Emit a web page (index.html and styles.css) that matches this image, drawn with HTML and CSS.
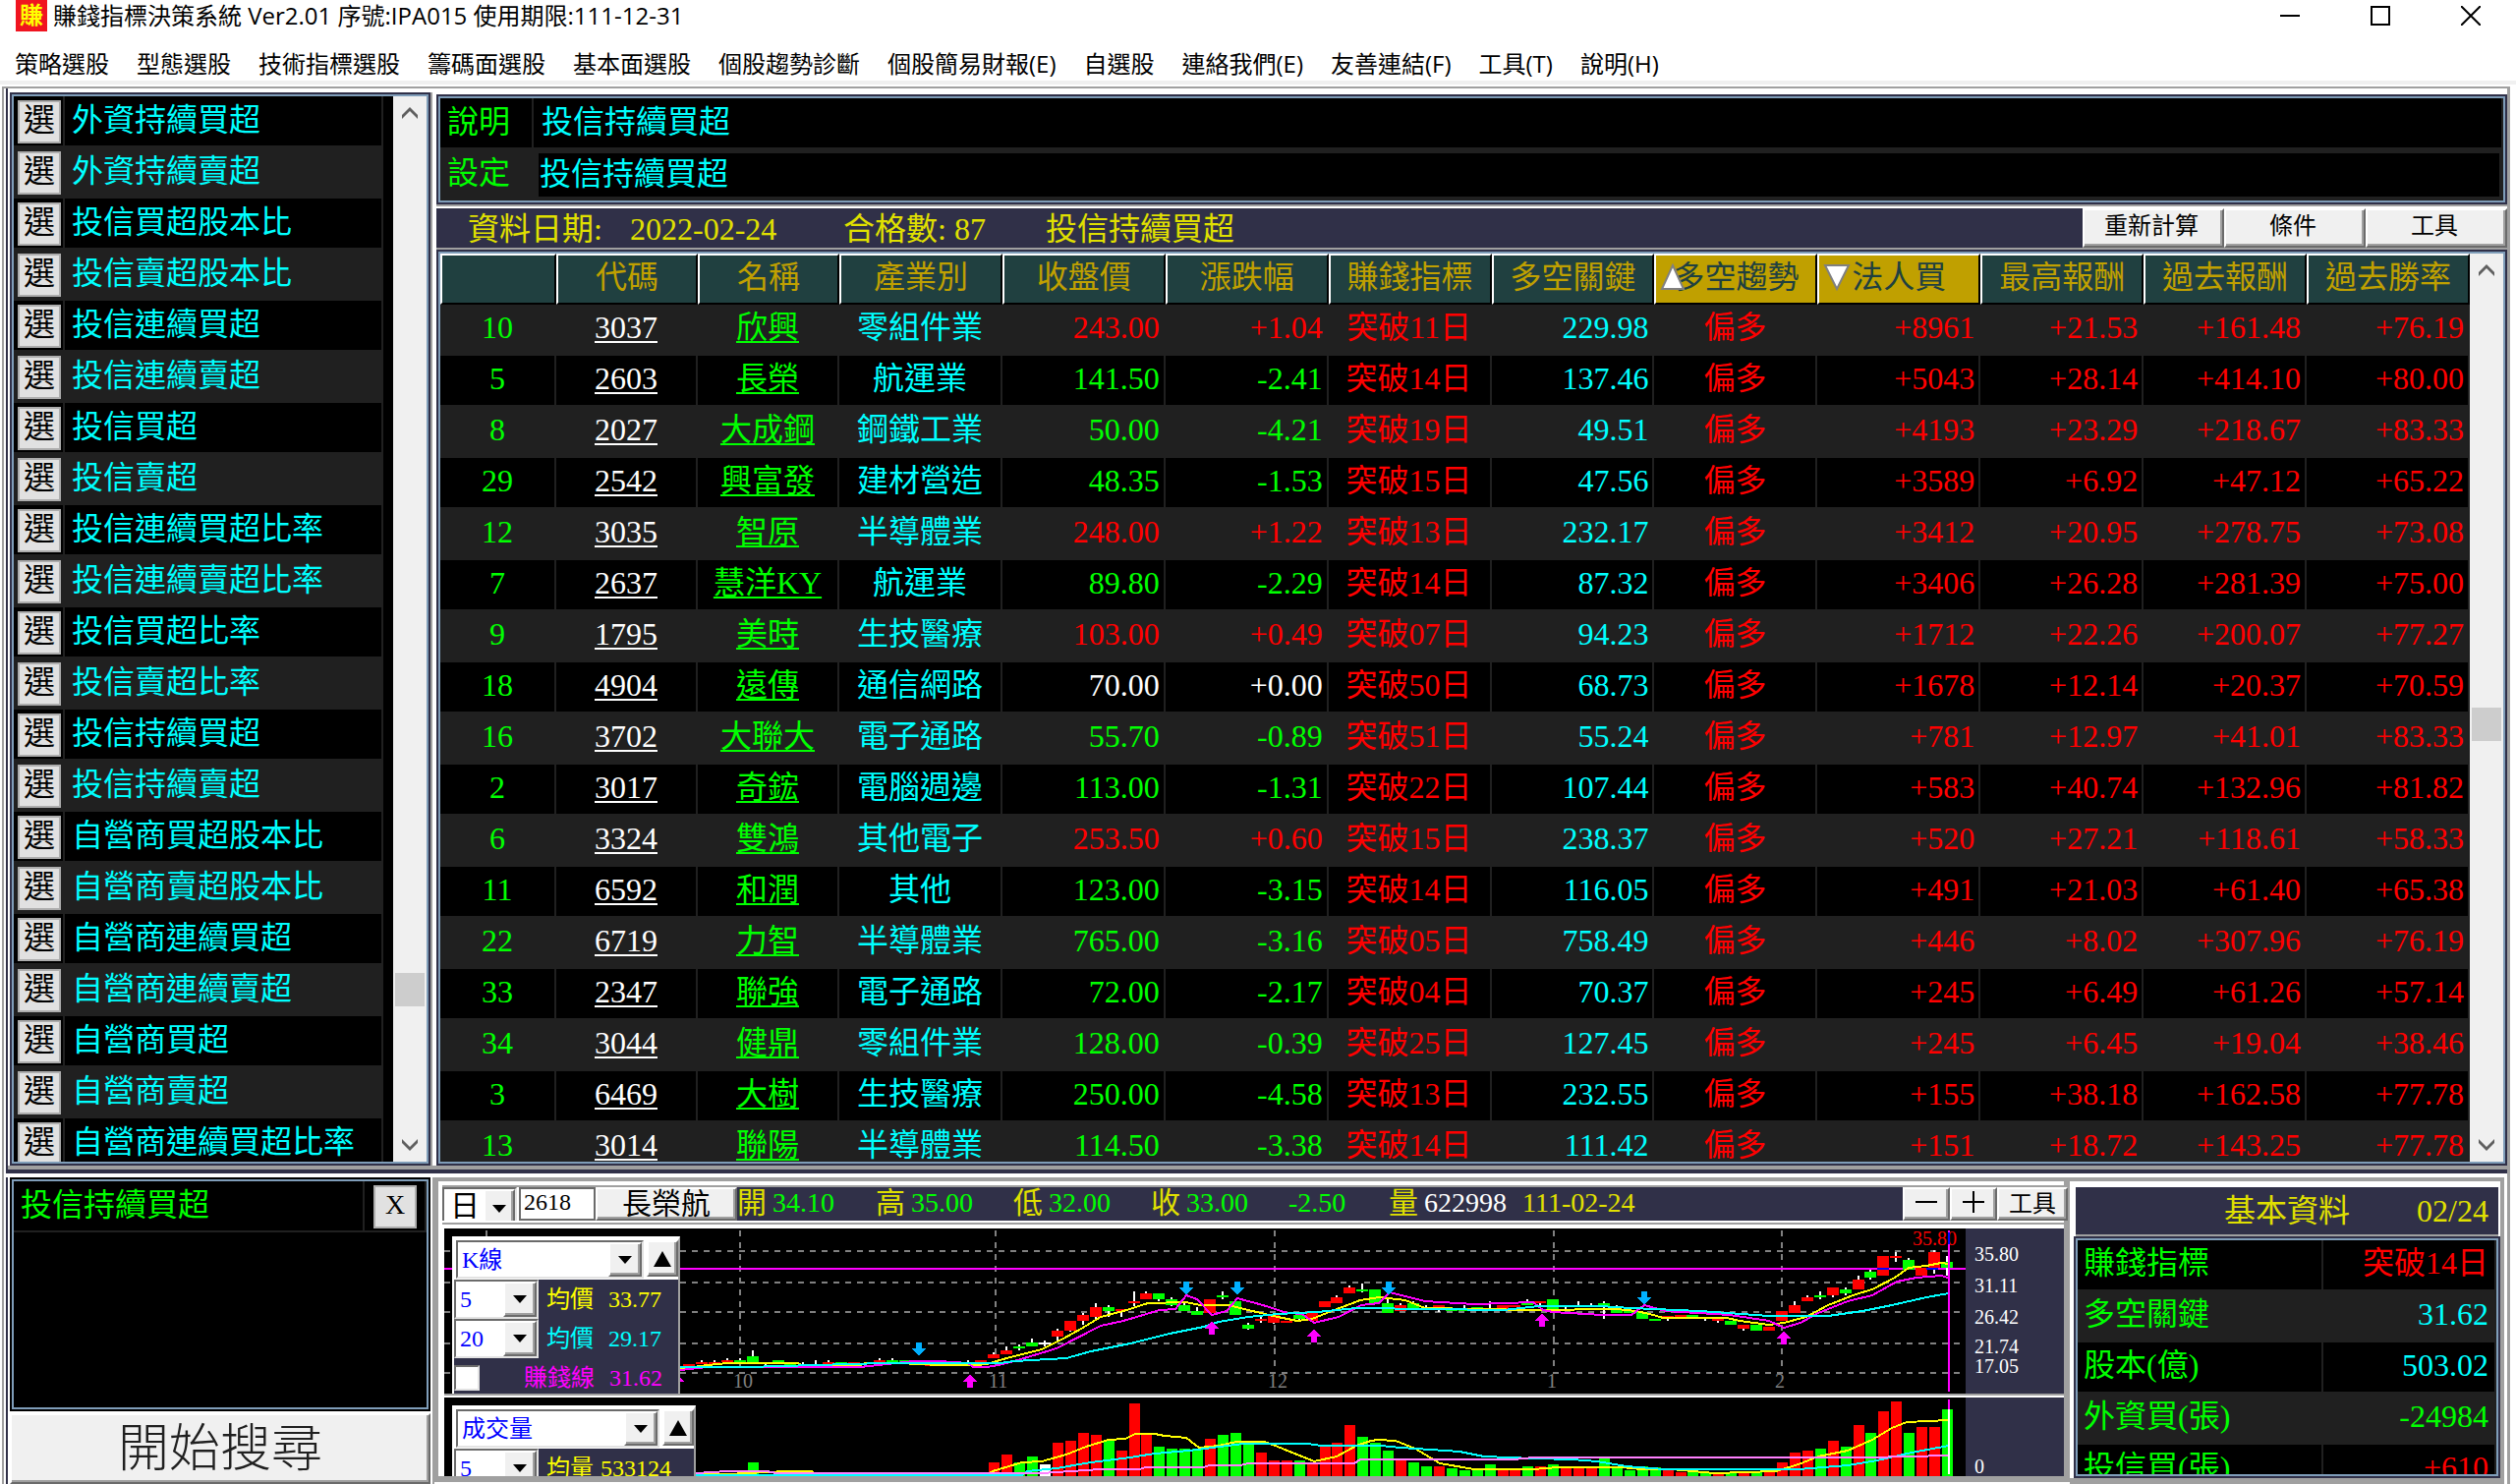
FILE: index.html
```html
<!DOCTYPE html>
<html lang="zh-Hant">
<head>
<meta charset="utf-8">
<title>賺錢指標決策系統</title>
<link rel="stylesheet" href="styles.css">
</head>
<body>
<svg class="sprite" aria-hidden="true">
  <symbol id="caret" viewBox="0 0 14 8"><path d="M0 0H14L7 8Z"/></symbol>
  <symbol id="peak" viewBox="0 0 18 16"><path d="M9 0L18 16H0Z"/></symbol>
  <symbol id="chev-up" viewBox="0 0 16 12"><path d="M0 8L8 0L16 8V12L8 4L0 12Z"/></symbol>
  <symbol id="chev-down" viewBox="0 0 16 12"><path d="M0 4L8 12L16 4V0L8 8L0 0Z"/></symbol>
</svg>
<div class="app">
  <header class="titlebar">
    <span class="logo">賺</span>
    <h1 class="title">賺錢指標決策系統 Ver2.01 序號:IPA015 使用期限:111-12-31</h1>
    <div class="window-buttons">
      <button type="button" aria-label="最小化"><svg width="20" height="20" viewBox="0 0 20 20"><path d="M0 10H20"/></svg></button>
      <button type="button" aria-label="最大化"><svg width="20" height="20" viewBox="0 0 20 20"><path d="M1 1H19V19H1Z"/></svg></button>
      <button type="button" aria-label="關閉"><svg width="20" height="20" viewBox="0 0 20 20"><path d="M0 0L20 20M20 0L0 20"/></svg></button>
    </div>
  </header>
  <nav class="menu">
    <a href="#">策略選股</a><a href="#">型態選股</a><a href="#">技術指標選股</a><a href="#">籌碼面選股</a><a href="#">基本面選股</a><a href="#">個股趨勢診斷</a><a href="#">個股簡易財報(E)</a><a href="#">自選股</a><a href="#">連絡我們(E)</a><a href="#">友善連結(F)</a><a href="#">工具(T)</a><a href="#">說明(H)</a>
  </nav>
  <main class="workspace">
    <section class="upper">
      <div class="list-frame">
        <div class="panel picker">
          <ul class="strategies">
            <li><button type="button">選</button><span>外資持續買超</span></li>
            <li><button type="button">選</button><span>外資持續賣超</span></li>
            <li><button type="button">選</button><span>投信買超股本比</span></li>
            <li><button type="button">選</button><span>投信賣超股本比</span></li>
            <li><button type="button">選</button><span>投信連續買超</span></li>
            <li><button type="button">選</button><span>投信連續賣超</span></li>
            <li><button type="button">選</button><span>投信買超</span></li>
            <li><button type="button">選</button><span>投信賣超</span></li>
            <li><button type="button">選</button><span>投信連續買超比率</span></li>
            <li><button type="button">選</button><span>投信連續賣超比率</span></li>
            <li><button type="button">選</button><span>投信買超比率</span></li>
            <li><button type="button">選</button><span>投信賣超比率</span></li>
            <li><button type="button">選</button><span>投信持續買超</span></li>
            <li><button type="button">選</button><span>投信持續賣超</span></li>
            <li><button type="button">選</button><span>自營商買超股本比</span></li>
            <li><button type="button">選</button><span>自營商賣超股本比</span></li>
            <li><button type="button">選</button><span>自營商連續買超</span></li>
            <li><button type="button">選</button><span>自營商連續賣超</span></li>
            <li><button type="button">選</button><span>自營商買超</span></li>
            <li><button type="button">選</button><span>自營商賣超</span></li>
            <li><button type="button">選</button><span>自營商連續買超比率</span></li>
          </ul>
          <div class="scrollbar">
            <button type="button" aria-label="向上捲動"><svg width="16" height="12"><use href="#chev-up"/></svg></button>
            <i class="before-low"></i><b></b><i class="after-low"></i>
            <button type="button" aria-label="向下捲動"><svg width="16" height="12"><use href="#chev-down"/></svg></button>
          </div>
        </div>
      </div>
      <div class="results">
        <div class="panel summary">
          <div class="summary-row"><span class="summary-name">說明</span><span class="summary-text">投信持續買超</span></div>
          <div class="summary-row alt"><label class="summary-name" for="setting">設定</label><input class="summary-input" id="setting" value="投信持續買超"></div>
        </div>
        <div class="result-bar">
          <div class="result-info"><span class="date">資料日期:</span><time>2022-02-24</time><span class="count">合格數: 87</span><span>投信持續買超</span></div>
          <button type="button" class="raised">重新計算</button>
          <button type="button" class="raised">條件</button>
          <button type="button" class="raised">工具</button>
        </div>
        <div class="panel table-panel">
          <div class="table-view">
          <table class="stocks">
            <colgroup><col class="c-rank"><col class="c-code"><col class="c-code"><col span="10"></colgroup>
            <thead><tr>
              <th aria-label="序"></th><th>代碼</th><th>名稱</th><th>產業別</th><th>收盤價</th><th>漲跌幅</th><th>賺錢指標</th><th>多空關鍵</th>
              <th class="sorted"><svg class="sort up" width="26" height="28" viewBox="0 0 26 28"><path d="M13 2L24 26H2Z"/></svg>多空趨勢</th>
              <th class="sorted"><svg class="sort down" width="28" height="28" viewBox="0 0 28 28"><path d="M2 2H26L14 26Z"/></svg>法人買</th>
              <th>最高報酬</th><th>過去報酬</th><th>過去勝率</th>
            </tr></thead>
            <tbody>
              <tr class="rise"><td>10</td><td><a href="#">3037</a></td><td><a href="#">欣興</a></td><td>零組件業</td><td>243.00</td><td>+1.04</td><td>突破11日</td><td>229.98</td><td>偏多</td><td>+8961</td><td>+21.53</td><td>+161.48</td><td>+76.19</td></tr>
              <tr class="fall"><td>5</td><td><a href="#">2603</a></td><td><a href="#">長榮</a></td><td>航運業</td><td>141.50</td><td>-2.41</td><td>突破14日</td><td>137.46</td><td>偏多</td><td>+5043</td><td>+28.14</td><td>+414.10</td><td>+80.00</td></tr>
              <tr class="fall"><td>8</td><td><a href="#">2027</a></td><td><a href="#">大成鋼</a></td><td>鋼鐵工業</td><td>50.00</td><td>-4.21</td><td>突破19日</td><td>49.51</td><td>偏多</td><td>+4193</td><td>+23.29</td><td>+218.67</td><td>+83.33</td></tr>
              <tr class="fall"><td>29</td><td><a href="#">2542</a></td><td><a href="#">興富發</a></td><td>建材營造</td><td>48.35</td><td>-1.53</td><td>突破15日</td><td>47.56</td><td>偏多</td><td>+3589</td><td>+6.92</td><td>+47.12</td><td>+65.22</td></tr>
              <tr class="rise"><td>12</td><td><a href="#">3035</a></td><td><a href="#">智原</a></td><td>半導體業</td><td>248.00</td><td>+1.22</td><td>突破13日</td><td>232.17</td><td>偏多</td><td>+3412</td><td>+20.95</td><td>+278.75</td><td>+73.08</td></tr>
              <tr class="fall"><td>7</td><td><a href="#">2637</a></td><td><a href="#">慧洋KY</a></td><td>航運業</td><td>89.80</td><td>-2.29</td><td>突破14日</td><td>87.32</td><td>偏多</td><td>+3406</td><td>+26.28</td><td>+281.39</td><td>+75.00</td></tr>
              <tr class="rise"><td>9</td><td><a href="#">1795</a></td><td><a href="#">美時</a></td><td>生技醫療</td><td>103.00</td><td>+0.49</td><td>突破07日</td><td>94.23</td><td>偏多</td><td>+1712</td><td>+22.26</td><td>+200.07</td><td>+77.27</td></tr>
              <tr class="flat"><td>18</td><td><a href="#">4904</a></td><td><a href="#">遠傳</a></td><td>通信網路</td><td>70.00</td><td>+0.00</td><td>突破50日</td><td>68.73</td><td>偏多</td><td>+1678</td><td>+12.14</td><td>+20.37</td><td>+70.59</td></tr>
              <tr class="fall"><td>16</td><td><a href="#">3702</a></td><td><a href="#">大聯大</a></td><td>電子通路</td><td>55.70</td><td>-0.89</td><td>突破51日</td><td>55.24</td><td>偏多</td><td>+781</td><td>+12.97</td><td>+41.01</td><td>+83.33</td></tr>
              <tr class="fall"><td>2</td><td><a href="#">3017</a></td><td><a href="#">奇鋐</a></td><td>電腦週邊</td><td>113.00</td><td>-1.31</td><td>突破22日</td><td>107.44</td><td>偏多</td><td>+583</td><td>+40.74</td><td>+132.96</td><td>+81.82</td></tr>
              <tr class="rise"><td>6</td><td><a href="#">3324</a></td><td><a href="#">雙鴻</a></td><td>其他電子</td><td>253.50</td><td>+0.60</td><td>突破15日</td><td>238.37</td><td>偏多</td><td>+520</td><td>+27.21</td><td>+118.61</td><td>+58.33</td></tr>
              <tr class="fall"><td>11</td><td><a href="#">6592</a></td><td><a href="#">和潤</a></td><td>其他</td><td>123.00</td><td>-3.15</td><td>突破14日</td><td>116.05</td><td>偏多</td><td>+491</td><td>+21.03</td><td>+61.40</td><td>+65.38</td></tr>
              <tr class="fall"><td>22</td><td><a href="#">6719</a></td><td><a href="#">力智</a></td><td>半導體業</td><td>765.00</td><td>-3.16</td><td>突破05日</td><td>758.49</td><td>偏多</td><td>+446</td><td>+8.02</td><td>+307.96</td><td>+76.19</td></tr>
              <tr class="fall"><td>33</td><td><a href="#">2347</a></td><td><a href="#">聯強</a></td><td>電子通路</td><td>72.00</td><td>-2.17</td><td>突破04日</td><td>70.37</td><td>偏多</td><td>+245</td><td>+6.49</td><td>+61.26</td><td>+57.14</td></tr>
              <tr class="fall"><td>34</td><td><a href="#">3044</a></td><td><a href="#">健鼎</a></td><td>零組件業</td><td>128.00</td><td>-0.39</td><td>突破25日</td><td>127.45</td><td>偏多</td><td>+245</td><td>+6.45</td><td>+19.04</td><td>+38.46</td></tr>
              <tr class="fall"><td>3</td><td><a href="#">6469</a></td><td><a href="#">大樹</a></td><td>生技醫療</td><td>250.00</td><td>-4.58</td><td>突破13日</td><td>232.55</td><td>偏多</td><td>+155</td><td>+38.18</td><td>+162.58</td><td>+77.78</td></tr>
              <tr class="fall"><td>13</td><td><a href="#">3014</a></td><td><a href="#">聯陽</a></td><td>半導體業</td><td>114.50</td><td>-3.38</td><td>突破14日</td><td>111.42</td><td>偏多</td><td>+151</td><td>+18.72</td><td>+143.25</td><td>+77.78</td></tr>
            </tbody>
          </table>
          </div>
          <div class="scrollbar">
            <button type="button" aria-label="向上捲動"><svg width="16" height="12"><use href="#chev-up"/></svg></button>
            <i class="before-mid"></i><b></b><i class="after-mid"></i>
            <button type="button" aria-label="向下捲動"><svg width="16" height="12"><use href="#chev-down"/></svg></button>
          </div>
        </div>
      </div>
    </section>
    <section class="lower">
      <div class="search">
        <div class="panel chosen">
          <div class="chosen-row"><span>投信持續買超</span><div class="chosen-remove"><button type="button">X</button></div></div>
        </div>
        <button type="button" class="start raised">開始搜尋</button>
      </div>
      <div class="chart">
        <div class="toolbar">
          <div class="combo period"><select aria-label="週期"><option>日</option></select><span class="drop"><svg width="14" height="8"><use href="#caret"/></svg></span></div>
          <input class="ticker" aria-label="股票代碼" value="2618">
          <button type="button" class="raised name">長榮航</button>
          <div class="quotes">
            <span><em>開</em>34.10</span><span><em>高</em>35.00</span><span><em>低</em>32.00</span><span><em>收</em>33.00</span><span>-2.50</span><span class="volume"><em>量</em>622998</span><time>111-02-24</time>
          </div>
          <button type="button" class="raised small" aria-label="縮小"><svg width="24" height="24" viewBox="0 0 24 24"><path d="M1 12H23"/></svg></button>
          <button type="button" class="raised small" aria-label="放大"><svg width="24" height="24" viewBox="0 0 24 24"><path d="M1 12H23M12 1V23"/></svg></button>
          <button type="button" class="raised tool">工具</button>
        </div>
        <div class="plots">
          <div class="plot price">
            <svg class="canvas" id="price" viewBox="452 0 1548 168" preserveAspectRatio="none" role="img" aria-label="K線圖">
              <g class="grid">
                <path d="M452 23H2000M452 55H2000M452 85H2000M452 117H2000M452 147H2000"/>
                <path d="M495 2V140M753 2V140M1013 2V140M1297 2V140M1581 2V140M1813 2V140"/>
              </g>
              <path class="magenta" d="M452 41H2000"/>
              <g class="months"><text x="746" y="162">10</text><text x="1006" y="162">11</text><text x="1290" y="162">12</text><text x="1574" y="162">1</text><text x="1806" y="162">2</text></g>
              <text class="peak" x="1946" y="17">35.80</text>
              <g id="candles"></g>
              <path class="yellow" d="M692 143L720 139L740 137H812L816 139H876L880 137H915L956 139H994L1004 138L1017 134L1032 130L1060 123L1082 112L1100 102L1120 90L1143 84L1168 76L1206 75L1222 78H1250L1270 83L1300 90L1320 94L1335 92L1355 84L1384 73L1403 70L1430 73L1450 81L1560 83L1645 82L1665 84L1682 88L1692 91H1757L1770 94L1800 98L1815 96L1838 90L1860 78L1888 67L1905 62L1928 50L1942 40L1960 38L1975 35L1983 36"/>
              <path class="magenta" d="M692 144L720 141H760H875L930 135H955L985 137L990 141H1004L1016 139L1032 135L1075 122L1120 99L1143 94L1180 83L1196 82L1207 68L1218 72L1233 88L1248 84L1259 71L1285 78L1310 86L1325 87L1337 96L1362 90L1385 78L1403 76L1414 65L1430 69L1450 74L1500 77L1560 75L1570 83L1580 85L1630 88H1660L1673 78L1695 84L1760 88L1800 94L1815 101L1832 96L1850 86L1880 74L1905 68L1930 54L1950 50L1975 48L1982 50"/>
              <path class="cyan" d="M692 141H760L900 137H1017L1032 135L1085 132L1110 125L1150 117L1190 107L1225 100L1240 95L1270 90L1300 87L1340 85L1380 81L1530 83L1565 79H1628L1660 81L1730 84L1800 89H1860L1895 84L1925 78L1960 70L1983 66"/>
              <g class="sell">
                <path id="sell" d="M932 116H938V122H942L935 130L928 122H932Z"/>
                <use href="#sell" x="272" y="-62"/><use href="#sell" x="324" y="-62"/><use href="#sell" x="478" y="-62"/><use href="#sell" x="738" y="-52"/>
              </g>
              <g class="buy">
                <path id="buy" d="M984 162H990V156H994L987 148L980 156H984Z"/>
                <use href="#buy" x="-298"/><use href="#buy" x="246" y="-54"/><use href="#buy" x="350" y="-46"/><use href="#buy" x="582" y="-62"/><use href="#buy" x="828" y="-44"/>
              </g>
              <path class="magenta" d="M1983 2V166"/>
              <path class="blue" d="M1983 4V16M1910 41H1922M1960 41H1972"/>
            </svg>
            <div class="scale"><span>35.80</span><span>31.11</span><span>26.42</span><span class="tight">21.74</span><span>17.05</span></div>
            <div class="overlay">
              <div class="overlay-head">
                <div class="combo wide"><select aria-label="主圖"><option>K線</option></select><span class="drop"><svg width="14" height="8"><use href="#caret"/></svg></span></div>
                <button type="button" class="raised fold" aria-label="收合"><svg width="18" height="16"><use href="#peak"/></svg></button>
              </div>
              <div class="overlay-row yellow-text"><div class="combo"><select aria-label="均價一"><option>5</option></select><span class="drop"><svg width="14" height="8"><use href="#caret"/></svg></span></div><span>均價</span><output>33.77</output></div>
              <div class="overlay-row cyan-text"><div class="combo"><select aria-label="均價二"><option>20</option></select><span class="drop"><svg width="14" height="8"><use href="#caret"/></svg></span></div><span>均價</span><output>29.17</output></div>
              <div class="overlay-row profit"><input type="checkbox" id="profit"><label for="profit">賺錢線</label><output>31.62</output></div>
            </div>
          </div>
          <div class="plot vol">
            <svg class="canvas" id="volume" viewBox="452 0 1548 80" preserveAspectRatio="none" role="img" aria-label="成交量圖">
              <g id="bars"></g>
              <path class="yellow" d="M708 78H740L800 75H826L830 78H1004L1010 75L1040 66L1060 65L1085 58L1105 50L1128 43L1145 42L1155 37H1175L1185 39L1207 41L1220 51L1240 49L1258 45H1287L1300 50L1337 65L1360 60L1380 49L1395 44L1402 43L1420 44L1440 52L1465 67L1500 73H1560L1585 71H1650L1670 73L1700 73L1745 77L1807 75L1830 68L1850 60L1880 54L1905 43L1925 31L1940 25L1983 23"/>
              <path class="cyan" d="M708 79H1040L1045 75L1075 72L1110 66L1150 61L1175 57L1210 54L1265 47H1330L1345 49H1405L1425 51L1485 55L1510 60L1560 62L1600 63L1625 65L1655 70L1693 73H1830L1880 69L1910 64L1945 56L1983 49"/>
              <path class="pink" d="M708 77L740 75H780L790 77H1060L1120 73H1160L1165 71H1225L1230 69H1262L1270 67H1378L1384 63H1540L1560 61H1900L1983 59"/>
              <path class="magenta" d="M1983 2V12"/><path class="white" d="M1983 12V78"/>
            </svg>
            <div class="scale zero"><span>0</span></div>
            <div class="overlay broad">
              <div class="overlay-head">
                <div class="combo wide"><select aria-label="副圖"><option>成交量</option></select><span class="drop"><svg width="14" height="8"><use href="#caret"/></svg></span></div>
                <button type="button" class="raised fold" aria-label="收合"><svg width="18" height="16"><use href="#peak"/></svg></button>
              </div>
              <div class="overlay-row yellow-text"><div class="combo"><select aria-label="均量"><option>5</option></select><span class="drop"><svg width="14" height="8"><use href="#caret"/></svg></span></div><span class="vol-name">均量</span><output>533124</output></div>
            </div>
          </div>
        </div>
      </div>
      <div class="facts">
        <div class="facts-head"><h2>基本資料</h2><time>02/24</time></div>
        <div class="panel facts-panel">
          <table class="facts-table">
            <colgroup><col class="c-fact"><col></colgroup>
            <tr><th>賺錢指標</th><td class="red-text">突破14日</td></tr>
            <tr><th>多空關鍵</th><td>31.62</td></tr>
            <tr><th>股本(億)</th><td>503.02</td></tr>
            <tr><th>外資買(張)</th><td class="green-text">-24984</td></tr>
            <tr><th>投信買(張)</th><td class="red-text">+610</td></tr>
          </table>
        </div>
      </div>
    </section>
  </main>
</div>
<script src="chart.js"></script>
</body>
</html>
```

FILE: chart.js
```javascript
// One entry per trading day: colour, body top, body bottom, wick top, wick bottom, volume.
const days = `
r 138 140 138 140 2;r 136 138 134 138 2;r 136 138 134 138 3;r 134 136 132 136 2;g 134 136 132 136 2;g 130 136 124 136 14
w 136 136 136 139 2;g 134 136 134 136 2;g 138 140 138 140 2;w 137 137 136 138 2;w 137 137 134 138 2;r 136 138 134 138 2
g 136 138 136 138 2;r 136 138 136 138 2;w 137 137 136 138 2;r 134 136 132 136 2;g 134 136 132 136 2;g 134 136 134 136 2
w 136 136 136 136 2;r 138 140 138 140 2;w 136 136 136 136 2;w 137 137 137 137 2;w 137 137 134 138 2;r 134 136 134 136 3
r 128 132 126 132 14;r 124 128 120 128 22;g 120 122 118 124 14;g 116 120 112 120 20;w 116 118 114 120 12;r 104 110 102 114 34
r 94 104 94 105 36;r 88 94 86 98 44;r 80 90 76 92 42;g 80 84 78 90 36;r 82 84 82 90 26;r 74 76 64 79 74
r 66 72 64 72 42;g 66 72 66 74 30;g 72 78 70 79 28;g 78 84 76 84 28;g 84 88 80 88 28;r 72 86 72 86 38
g 68 70 64 72 42;g 74 88 74 88 44;g 98 102 96 103 33;r 92 94 88 96 24;r 88 96 88 97 16;r 94 96 94 96 16
g 88 92 88 93 16;r 86 94 86 94 14;r 74 80 74 80 32;r 70 76 68 76 34;r 60 66 58 66 52;g 62 64 56 65 40
g 62 76 62 76 34;g 76 86 72 86 26;r 78 84 76 84 16;g 76 82 74 82 14;g 81 82 78 82 10;r 78 82 78 85 10
g 82 84 82 84 8;g 82 84 78 84 6;g 80 84 80 84 6;g 82 84 74 84 12;r 78 84 78 84 6;r 78 80 78 80 6
g 76 78 72 78 10;r 74 76 74 78 10;g 72 82 72 82 12;r 80 80 80 84 10;r 76 76 74 78 10;r 77 77 76 78 10
g 76 80 74 92 18;g 82 86 78 86 8;g 84 86 84 86 6;g 85 92 85 92 10;g 92 94 92 94 9;r 89 91 89 94 6
r 88 90 88 90 4;g 88 91 88 91 4;g 91 91 90 94 4;r 92 94 92 96 3;g 94 98 94 98 4;r 98 102 98 104 4
g 98 104 98 104 5;r 100 104 100 104 5;r 84 94 84 94 14;r 78 86 74 86 24;r 70 74 68 74 26;g 68 70 64 72 28
r 60 68 60 70 36;g 62 66 60 68 30;r 52 62 48 62 52;g 44 50 42 52 44;r 28 48 28 48 66;r 28 30 24 34 76
g 32 42 30 42 44;r 40 48 40 48 50;r 24 40 22 46 50;g 34 40 28 48 68`.trim().split(/[;\n]/);

const rect = (cls, x, y, w, h) => h > 0 ? `<rect class="${cls}" x="${x}" y="${y}" width="${w}" height="${h}"/>` : "";
const firstDay = 701;
let candles = "";
let bars = "";
days.forEach((day, i) => {
  const [cls, ...parts] = day.split(" ");
  const [top, bottom, high, low, volume] = parts.map(Number);
  const x = Math.round(firstDay + i * 12.93);
  candles += rect("w", x - 1, high, 2, low - high) + rect(cls, x - 6, top, 12, bottom - top);
  bars += rect(cls, x - 5, 80 - volume, 11, volume);
});
document.getElementById("candles").innerHTML = candles;
document.getElementById("bars").innerHTML = bars;
```

FILE: styles.css
```css
:root {
  --navy: #303048;
  --grey: #a0a0a0;
  --steel: #7f9db9;
  --coal: #202020;
  --face: #f0f0f0;
  --gold: #c0a000;
  --teal: #204040;
  --yellow: #e0e000;
  --ming: "Liberation Serif", "Noto Sans CJK TC", serif;
  --ui: "Open Sans", "Noto Sans CJK TC", sans-serif;
}
* { box-sizing: border-box; }
body { margin: 0; background: #fff; font: 400 32px/48px var(--ming); color: #000; }
button, input, select { font: inherit; color: inherit; margin: 0; padding: 0; border: 0; border-radius: 0; background: none; }
a { color: inherit; }
ul { list-style: none; margin: 0; padding: 0; }
h1, h2 { margin: 0; font: inherit; }
em { font-style: normal; }
table { border-spacing: 0; table-layout: fixed; width: 100%; }
.sprite { position: absolute; width: 0; height: 0; }

.app { height: 100vh; display: flex; flex-direction: column; overflow: hidden; }

.titlebar { height: 32px; flex: none; display: flex; align-items: center; padding-left: 16px; font: 400 24px/30px var(--ui); }
.logo { width: 32px; height: 32px; flex: none; background: #f01420; color: #ff0; font-weight: 700; text-align: center; }
.title { padding-left: 6px; flex: 1; }
.window-buttons { display: flex; }
.window-buttons button { width: 92px; height: 30px; display: grid; place-items: center; }
.window-buttons svg { fill: none; stroke: #000; stroke-width: 2; }

.menu { flex: none; height: 54px; display: flex; align-items: center; gap: 28px; padding: 16px 0 0 15px; border-bottom: 4px solid var(--face); font: 400 24px/34px var(--ui); }
.menu a { text-decoration: none; white-space: nowrap; }

.workspace { flex: 1; min-height: 0; margin: 2px 6px 0 2px; border: solid var(--grey); border-width: 2px 3px 0 2px; display: flex; flex-direction: column; }
.upper { flex: 1; min-height: 0; display: flex; margin-left: 2px; padding: 4px 0 4px 2px; border-left: 2px solid var(--navy); border-bottom: 4px solid var(--navy); box-shadow: inset 0 -4px var(--grey); }
.panel { border: 2px solid var(--navy); outline: 2px solid var(--steel); outline-offset: -4px; padding: 2px; background: #000; }
.list-frame { width: 434px; flex: none; display: flex; padding-right: 6px; }
.picker { flex: 1; display: flex; overflow: hidden; box-shadow: 2px 0 var(--grey); }
.strategies { flex: 1; overflow: hidden; margin-right: 10px; color: #0ff; }
.strategies li { height: 52px; display: flex; border: solid var(--coal); border-width: 0 2px 2px 0; }
.strategies li:nth-child(even) { background: var(--coal); }
.strategies button { width: 44px; height: 44px; margin: 4px 2px 0 4px; padding-bottom: 4px; background: #e1e1e1; border: 2px solid #adadad; line-height: 36px; color: #000; }
.strategies span { flex: 1; padding-left: 7px; border-left: 2px solid var(--coal); line-height: 48px; white-space: nowrap; }

.scrollbar { width: 34px; flex: none; display: flex; flex-direction: column; background: var(--face); padding: 0 2px; }
.scrollbar button { height: 34px; flex: none; display: grid; place-items: center; }
.scrollbar svg { fill: #606060; }
.scrollbar b { height: 34px; flex: none; background: #cdcdcd; }
.before-low { flex: 858; }
.after-low { flex: 124; }
.before-mid { flex: 428; }
.after-mid { flex: 394; }

.results { flex: 1; min-width: 0; display: flex; flex-direction: column; padding-top: 2px; }
.summary { flex: none; color: #0ff; }
.summary-row { display: flex; height: 52px; border: solid var(--coal); border-width: 0 2px 2px 0; }
.summary-row.alt { background: var(--coal); border-right-width: 4px; border-bottom-width: 4px; padding-top: 4px; }
.summary-name { width: 95px; flex: none; padding-left: 7px; color: #0f0; border-right: 2px solid var(--coal); line-height: 48px; }
.summary-text { padding-left: 8px; line-height: 48px; }
.summary-input { flex: 1; height: 44px; margin-left: 5px; background: #000; line-height: 36px; padding: 0 0 8px 1px; }
.alt .summary-name { line-height: 40px; }
.result-bar { flex: none; height: 46px; display: flex; border-top: 2px solid var(--grey); border-bottom: 2px solid var(--grey); padding-top: 2px; }
.result-info { flex: 1; display: flex; background: var(--navy); color: var(--yellow); line-height: 42px; padding-left: 32px; white-space: pre; }
.result-info .date { width: 165px; }
.result-info time { width: 217px; }
.result-info .count { width: 206px; }
.raised { background: var(--face); border: 2px solid; border-color: #fff #6b6b6b #6b6b6b #fff; box-shadow: inset -2px -2px var(--grey); }
.result-bar .raised { width: 144px; font-size: 24px; line-height: 30px; padding: 0 4px 4px 0; }

.table-panel { flex: 1; min-height: 0; display: flex; }
.table-view { flex: 1; min-width: 0; overflow: hidden; }
.c-rank { width: 118px; }
.c-code { width: 144px; }
.stocks th { height: 52px; padding: 0; background: var(--teal); color: var(--gold); font-weight: 400; line-height: 44px; vertical-align: top; position: relative; border: 2px solid; border-color: #fff #000 #000 #fff; white-space: nowrap; }
.stocks th.sorted { background: var(--gold); color: var(--teal); }
.sort { position: absolute; top: 8px; left: 4px; fill: #fff; stroke: #808080; stroke-width: 2; }
.stocks td { height: 52px; padding: 0 4px 4px; border: solid var(--coal); border-width: 0 2px 2px 0; line-height: 46px; text-align: center; white-space: nowrap; color: #f00; }
.stocks tbody tr:nth-child(odd) { background: var(--coal); }
.stocks td:nth-child(1), .stocks td:nth-child(3) { color: #0f0; }
.stocks td:nth-child(2) { color: #fff; }
.stocks td:nth-child(4), .stocks td:nth-child(8) { color: #0ff; }
.stocks td:nth-child(5), .stocks td:nth-child(6), .stocks td:nth-child(8), .stocks td:nth-child(n+10) { text-align: right; }
.fall td:nth-child(5), .fall td:nth-child(6) { color: #0f0; }
.flat td:nth-child(5), .flat td:nth-child(6) { color: #fff; }
.stocks a { text-decoration-thickness: 2px; text-underline-offset: 3px; }

.lower { flex: none; height: 316px; display: flex; padding-top: 4px; }
.search { width: 436px; flex: none; display: flex; flex-direction: column; gap: 2px; padding: 0 2px; margin-left: 2px; border-left: 2px solid var(--navy); border-right: 2px solid var(--grey); }
.chosen { flex: 1; border-color: #000; }
.chosen-row { display: flex; height: 52px; border-bottom: 2px solid var(--coal); color: #0f0; line-height: 48px; }
.chosen-row > span { flex: 1; padding-left: 7px; }
.chosen-remove { width: 65px; padding: 4px 0 0 9px; border: solid var(--coal); border-width: 0 2px; line-height: 36px; }
.chosen-remove button { width: 44px; height: 44px; background: #e1e1e1; border: 2px solid #adadad; color: #000; font-size: 28px; padding-bottom: 6px; }
.start { height: 72px; flex: none; font: 300 52px/60px var(--ui); color: #202020; padding-bottom: 4px; }

.chart { flex: 1; min-width: 0; border: solid var(--grey); border-width: 4px 6px 6px 4px; margin-bottom: 2px; padding: 4px 0 0 4px; display: flex; flex-direction: column; }
.toolbar { flex: none; height: 36px; display: flex; margin-right: -4px; border-top: 2px solid var(--grey); overflow: hidden; }
.combo { display: flex; background: #fff; border: 2px solid; border-color: #6b6b6b #e3e3e3 #e3e3e3 #6b6b6b; }
.combo select { appearance: none; flex: 1; min-width: 0; padding-left: 4px; }
.drop { width: 34px; flex: none; display: grid; place-items: center; background: var(--face); border: 2px solid; border-color: #fff #6b6b6b #6b6b6b #fff; box-shadow: inset -2px -2px var(--grey); pointer-events: none; }
.period { width: 76px; height: 44px; font-size: 30px; line-height: 34px; }
.period select { height: 34px; padding-left: 6px; }
.period .drop { height: 40px; width: 32px; }
.ticker { width: 78px; height: 34px; margin-left: 2px; padding: 0 0 4px 3px; border: 2px solid #6b6b6b; background: #fff; font-size: 24px; }
.name { width: 144px; height: 34px; font-size: 30px; line-height: 30px; }
.quotes { flex: 1; height: 34px; display: grid; grid-template-columns: 141px 140px 140px 140px 102px 136px 1fr; background: var(--navy); color: #0f0; font-size: 28px; line-height: 32px; white-space: nowrap; }
.quotes span { display: flex; }
.quotes em { width: 36px; font-size: 30px; color: var(--yellow); }
.quotes .volume { color: #fff; }
.quotes time { color: var(--yellow); }
.small { width: 48px; height: 34px; display: grid; place-items: center; padding-bottom: 4px; }
.small svg { fill: none; stroke: #000; stroke-width: 2; }
.tool { width: 72px; height: 34px; font-size: 24px; line-height: 28px; }

.plots { flex: 1; min-height: 0; display: flex; flex-direction: column; margin-top: 2px; padding-left: 2px; border-top: 2px solid var(--grey); }
.plot { position: relative; display: flex; min-height: 0; background: #000; }
.price { flex: 168; margin-top: 4px; }
.vol { flex: 80; margin-top: 4px; box-shadow: 0 -2px #fff, 0 -4px var(--grey); }
.canvas { flex: 1; min-width: 0; height: 100%; shape-rendering: crispEdges; }
.canvas path { fill: none; stroke-width: 2; }
.grid path { stroke: #808080; stroke-dasharray: 6 6; }
.canvas .yellow { stroke: #ff0; }
.canvas .magenta { stroke: #f0f; }
.canvas .cyan { stroke: #0ff; }
.canvas .pink { stroke: #ff80ff; }
.canvas .white { stroke: #fff; }
.canvas .blue { stroke: #00f; }
.canvas #sell { fill: #00b0ff; }
.canvas #buy { fill: #f0f; }
.canvas text { font-size: 20px; fill: #808080; }
.canvas .peak { fill: #f00; }
.r { fill: #f00; }
.g { fill: #0f0; }
.w { fill: #fff; }
.scale { width: 100px; flex: none; background: var(--navy); color: #fff; font-size: 20px; line-height: 32px; padding: 10px 0 0 9px; display: flex; flex-direction: column; }
.scale .tight { line-height: 20px; padding-top: 4px; }
.scale .tight + span { line-height: 20px; }
.scale.zero { padding: 60px 0 0 9px; line-height: 20px; }

.overlay { position: absolute; top: 8px; left: 8px; width: 232px; height: 162px; background: var(--navy); border: solid #fff; border-width: 4px 2px 0 2px; border-right-color: var(--grey); font-size: 24px; line-height: 30px; overflow: hidden; }
.overlay.broad { width: 248px; height: 72px; }
.overlay-head { height: 40px; display: flex; gap: 3px; background: #fff; padding: 0 0 0 2px; }
.overlay-head .combo { flex: 1; height: 39px; color: #00f; }
.fold { width: 32px; height: 37px; display: grid; place-items: center; }
.overlay-row { height: 40px; display: flex; align-items: center; }
.overlay-row .combo { width: 86px; height: 40px; color: #00f; flex: none; }
.overlay-row > span { width: 71px; padding-left: 8px; }
.overlay-row > .vol-name { width: 63px; }
.yellow-text { color: #ff0; }
.cyan-text { color: #0ff; }
.red-text { color: #f00; }
.green-text { color: #0f0; }
.profit { color: #f0f; }
.profit input { appearance: none; width: 26px; height: 26px; background: #fff; border: 2px solid; border-color: #6b6b6b #e3e3e3 #e3e3e3 #6b6b6b; }
.profit label { width: 132px; padding-left: 45px; white-space: nowrap; }

.facts { width: 442px; flex: none; display: flex; flex-direction: column; border: solid var(--grey); border-width: 4px 4px 6px 0; padding: 6px 0 0 4px; margin-right: 3px; }
.facts-head { flex: none; height: 50px; display: grid; grid-template-columns: 1fr auto 1fr; margin: 0 2px; background: var(--navy); border-bottom: 2px solid var(--grey); color: var(--yellow); line-height: 48px; }
.facts-head h2 { grid-column: 2; }
.facts-head time { text-align: right; padding-right: 10px; }
.facts-panel { flex: 1; min-height: 0; overflow: hidden; }
.c-fact { width: 250px; }
.facts-table th, .facts-table td { height: 52px; padding: 0 6px 4px; border: solid var(--coal); border-width: 0 2px 2px 0; font-weight: 400; line-height: 46px; text-align: left; color: #0f0; white-space: nowrap; }
.facts-table td { text-align: right; color: #0ff; }
.facts-table td.red-text { color: #f00; }
.facts-table td.green-text { color: #0f0; }
.facts-table tr:nth-child(even) { background: var(--coal); }
```
